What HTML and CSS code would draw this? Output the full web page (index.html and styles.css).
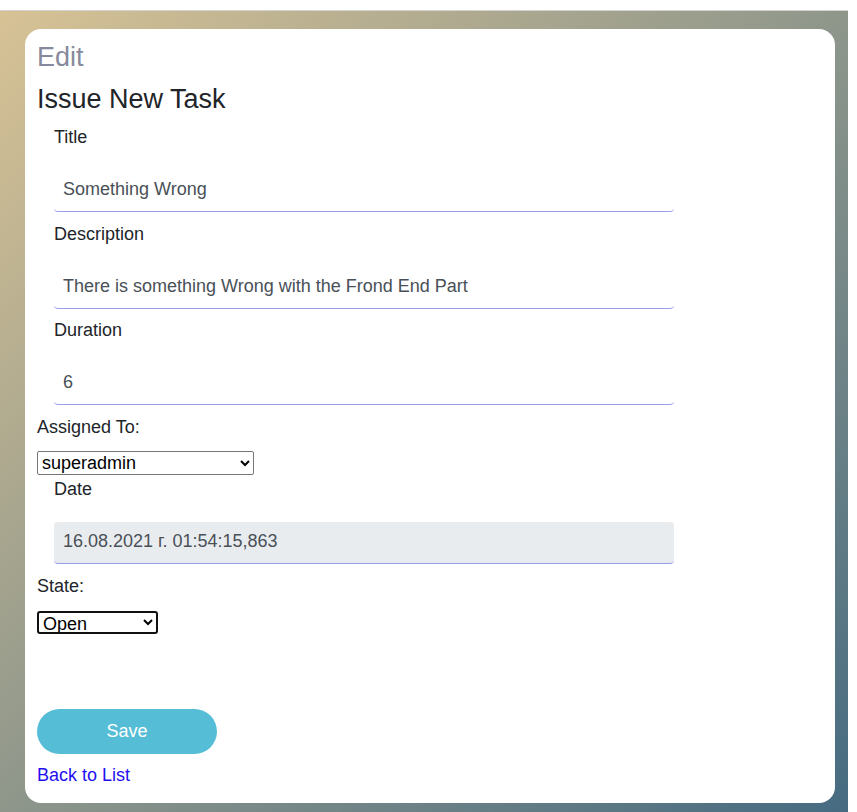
FILE: index.html
```html
<!DOCTYPE html>
<html lang="en">
<head>
<meta charset="utf-8">
<title>Edit</title>
<link rel="stylesheet" href="styles.css">
</head>
<body>
<div class="topbar"></div>
<div class="page">
  <div class="card">
    <h2 class="heading heading-muted">Edit</h2>
    <h2 class="heading">Issue New Task</h2>
    <form class="task-form">
      <div class="form-group">
        <label class="field-label">Title</label>
        <input class="field-input" type="text" value="Something Wrong">
      </div>
      <div class="form-group">
        <label class="field-label">Description</label>
        <input class="field-input" type="text" value="There is something Wrong with the Frond End Part">
      </div>
      <div class="form-group">
        <label class="field-label">Duration</label>
        <input class="field-input" type="text" value="6">
      </div>
      <label class="plain-label">Assigned To:</label>
      <select class="select-user">
        <option>superadmin</option>
      </select>
      <div class="form-group form-group-date">
        <label class="field-label">Date</label>
        <input class="field-input field-readonly" type="text" value="16.08.2021 г. 01:54:15,863" readonly>
      </div>
      <label class="plain-label">State:</label>
      <select class="select-state">
        <option>Open</option>
      </select>
      <div class="actions">
        <button class="save-btn" type="button">Save</button>
      </div>
    </form>
    <a class="back-link" href="#">Back to List</a>
  </div>
</div>
</body>
</html>
```
FILE: styles.css
```css
html, body {
  margin: 0;
  padding: 0;
  background: #ffffff;
}

body {
  font-family: "Liberation Sans", Arial, sans-serif;
  font-size: 18px;
  line-height: 27px;
  color: #212529;
}

.topbar {
  height: 10px;
  background: #ffffff;
}

.page {
  width: 848px;
  box-sizing: border-box;
  border-top: 1px solid #d2d2d2;
  padding: 18px 13px 10px 25px;
  background: linear-gradient(to bottom right, #d7c295, #466b81);
}

.card {
  background: #ffffff;
  border-radius: 16px;
  padding: 12px 12px 13.5px 12px;
}

.heading {
  margin: 0 0 9.5px;
  font-size: 27px;
  line-height: 32.4px;
  font-weight: 400;
  color: #212529;
}

.heading + .heading {
  margin-bottom: 9px;
}

.heading-muted {
  color: #878a9d;
}

.task-form {
  margin: 0;
}

.form-group {
  padding-left: 17px;
  margin-bottom: 8.5px;
}

.form-group-date {
  margin-bottom: 9px;
}

.field-label {
  display: block;
  margin-bottom: 19px;
}

.field-input {
  display: block;
  box-sizing: border-box;
  width: 620px;
  height: 42px;
  margin: 0;
  padding: 0 9px 2.5px;
  border: none;
  border-bottom: 1px solid #979eec;
  border-radius: 4px;
  background: #ffffff;
  font-family: "Liberation Sans", Arial, sans-serif;
  font-size: 18px;
  color: #495057;
  outline: none;
}

.field-readonly {
  background: #e9ecef;
}

.plain-label {
  display: block;
  margin-bottom: 10.5px;
}

.select-user,
.select-state {
  display: block;
  box-sizing: border-box;
  margin: 0;
  font-family: "Liberation Sans", Arial, sans-serif;
  font-size: 18px;
  color: #000000;
  background-color: #ffffff;
}

.select-user {
  width: 217px;
  height: 24px;
  border: 1px solid #767676;
  border-radius: 2px;
}

.select-user + .form-group {
  margin-top: 1px;
}

.select-state {
  width: 121px;
  height: 23px;
  border: 2px solid #101010;
  border-radius: 3px;
}

.actions {
  margin-top: 75px;
}

.save-btn {
  display: block;
  width: 180px;
  height: 45px;
  border: none;
  border-radius: 23px;
  background: #55bdd6;
  color: #ffffff;
  font-family: "Liberation Sans", Arial, sans-serif;
  font-size: 18px;
  cursor: pointer;
}

.back-link {
  display: block;
  margin-top: 8.5px;
  color: #1f0ff0;
  text-decoration: none;
}
```
